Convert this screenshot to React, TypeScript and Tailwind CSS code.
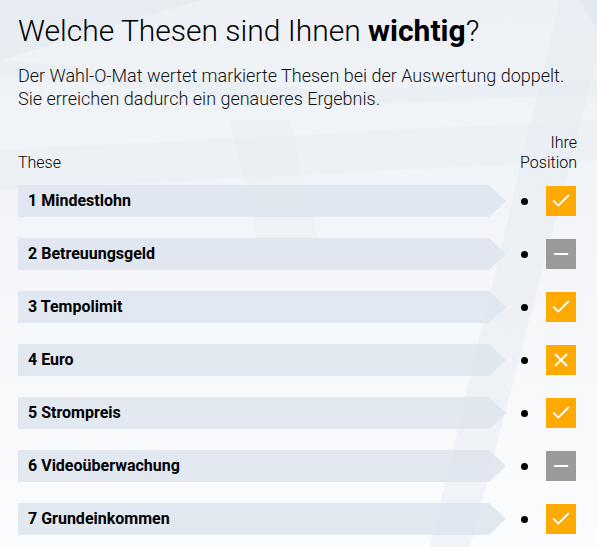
import { Check, Minus, X } from 'lucide-react';

type Stance = 'yes' | 'neutral' | 'no';

const THESES: { id: number; title: string; stance: Stance }[] = [
  { id: 1, title: 'Mindestlohn', stance: 'yes' },
  { id: 2, title: 'Betreuungsgeld', stance: 'neutral' },
  { id: 3, title: 'Tempolimit', stance: 'yes' },
  { id: 4, title: 'Euro', stance: 'no' },
  { id: 5, title: 'Strompreis', stance: 'yes' },
  { id: 6, title: 'Videoüberwachung', stance: 'neutral' },
  { id: 7, title: 'Grundeinkommen', stance: 'yes' },
];

export default function App() {
  return (
    <div
      className="relative w-[597px] h-[547px] overflow-hidden bg-gradient-to-b from-[#edf1f6] via-[#f4f6f9] to-[#fbfcfd] text-black"
      style={{ fontFamily: 'Roboto, "Liberation Sans", sans-serif' }}
    >
      {/* faint background shapes */}
      <svg className="absolute inset-0 pointer-events-none" width="597" height="547" viewBox="0 0 597 547">
        <polygon points="0,0 200,0 0,60" fill="#e3e9f1" opacity="0.6" />
        <polygon points="560,0 597,0 597,60 470,547 430,547" fill="#e6ebf2" opacity="0.5" />
        <polygon points="580,0 597,0 597,30" fill="#dfe6ef" opacity="0.6" />
        <polygon points="0,60 320,90 597,80 597,95 320,105 0,75" fill="#e6ebf2" opacity="0.5" />
        <polygon points="0,150 597,120 597,160 0,190" fill="#e8edf3" opacity="0.5" />
        <polygon points="230,120 290,120 320,250 260,250" fill="#e9eef4" opacity="0.5" />
      </svg>

      <div className="relative px-[18px] pt-[12px]">
        <h1 className="text-[30px] leading-[38px] font-light">
          Welche Thesen sind Ihnen <span className="font-bold">wichtig</span>?
        </h1>
        <p className="mt-[14px] text-[18px] leading-[23px] font-light text-[#111]">
          Der Wahl-O-Mat wertet markierte Thesen bei der Auswertung doppelt.
          <br />
          Sie erreichen dadurch ein genaueres Ergebnis.
        </p>

        <div className="mt-[23px] flex items-end justify-between pr-[2px]">
          <span className="text-[16px] leading-[20px] font-light">These</span>
          <span className="text-[16px] leading-[20px] font-light text-right">
            Ihre
            <br />
            Position
          </span>
        </div>

        <div className="mt-[12px] flex flex-col gap-[21px]">
          {THESES.map((t) => (
            <ThesisRow key={t.id} {...t} />
          ))}
        </div>
      </div>
    </div>
  );
}

function ThesisRow({ id, title, stance }: { id: number; title: string; stance: Stance }) {
  return (
    <div className="flex items-center h-[32px]">
      <div className="flex h-full">
        <div className="w-[471px] h-full bg-[#dfe6ee]/90 flex items-center pl-[10px] text-[16px] font-bold">
          {id} {title}
        </div>
        <svg width="17" height="32" viewBox="0 0 17 32" className="block">
          <polygon points="0,0 0,32 17,16" fill="#dfe6ee" fillOpacity="0.9" />
        </svg>
      </div>
      <span className="ml-[15px] w-[7px] h-[7px] rounded-full bg-black" />
      <StanceBox stance={stance} />
    </div>
  );
}

function StanceBox({ stance }: { stance: Stance }) {
  const bg = stance === 'neutral' ? 'bg-[#9a9a9a]' : 'bg-[#ffaa00]';
  return (
    <div className={`ml-[18px] w-[30px] h-[30px] ${bg} flex items-center justify-center text-white`}>
      {stance === 'yes' && <Check size={22} strokeWidth={2} />}
      {stance === 'neutral' && <Minus size={22} strokeWidth={2} />}
      {stance === 'no' && <X size={22} strokeWidth={2} />}
    </div>
  );
}
